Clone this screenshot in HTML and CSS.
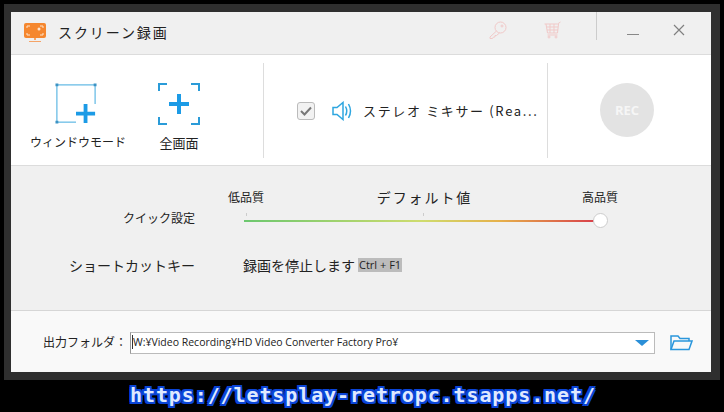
FILE: index.html
```html
<!DOCTYPE html>
<html lang="ja">
  <head>
    <meta charset="utf-8" />
    <title>スクリーン録画</title>
    <link rel="stylesheet" href="styles.css">
  </head>

  <body>
    <div class="frame">
      <div class="window">
        <div class="title-bar">
          <svg class="logo" width="22" height="20" viewBox="0 0 22 20">
            <rect x="0" y="0" width="22" height="15" rx="2" fill="#f5872f" />
            <path d="M3 5V3h3M16 3h3v2M3 10v2h3M19 10v2h-3" fill="none" stroke="#fde3cc" stroke-width="1" />
            <circle cx="15" cy="6" r="1.5" fill="#fde3cc" />
            <path d="M10 15h2v2h-2zM5 18h12v1H5z" fill="#f5a468" />
          </svg>
          <span class="title">スクリーン録画</span>
          <div class="title-actions">
            <svg class="key-icon" width="18" height="18" viewBox="0 0 18 18" fill="none" stroke="#f1c9c8" stroke-width="1">
              <circle cx="11.5" cy="6.5" r="5.5" />
              <circle cx="13" cy="5" r="1" />
              <path d="M7.5 10L1 16v1.500h2.500l1-1.500h1.500v-1.500h1.500L10.500 12" />
            </svg>
            <svg class="cart-icon" width="18" height="18" viewBox="0 0 18 18" fill="none" stroke="#f1c9c8" stroke-width="1">
              <path d="M0.500 3h13l3-2M2 3l1.500 9h10l1-9M3 6h11M3 9h11M6 3v9M10 3v9" />
              <path d="M3.500 14h10" />
              <circle cx="5" cy="16" r="1" />
              <circle cx="12" cy="16" r="1" />
            </svg>
            <div class="title-divider"></div>
            <svg class="min-icon" width="12" height="12" viewBox="0 0 12 12">
              <path d="M0 10.500h12" stroke="#888" stroke-width="1" />
            </svg>
            <svg class="close-icon" width="12" height="12" viewBox="0 0 12 12">
              <path d="M1 1l10 10M11 1L1 11" stroke="#808080" stroke-width="1.200" />
            </svg>
          </div>
        </div>

        <div class="toolbar">
          <div class="tools">
            <div class="tool tool-window">
              <svg width="42" height="42" viewBox="0 0 44 44">
                <path d="M22 41H2V2h40v20" fill="none" stroke="#35a6dc" stroke-width="1" />
                <path d="M0.500 0.500h3v3h-3zM40.500 0.500h3v3h-3zM0.500 39.500h3v3h-3z" fill="#3d93c4" />
                <path d="M30 22h4v8h8v4h-8v8h-4v-8h-8v-4h8z" fill="#1c9be6" />
              </svg>
              <span>ウィンドウモード</span>
            </div>
            <div class="tool tool-full">
              <svg width="44" height="44" viewBox="0 0 44 44">
                <path d="M2 9V2h8M34 2h8v7M2 35v7h8M34 42h8v-7" fill="none" stroke="#2a9bd8" stroke-width="2" />
                <path d="M20 12h4v8h8v4h-8v8h-4v-8h-8v-4h8z" fill="#1c9be6" />
              </svg>
              <span>全画面</span>
            </div>
          </div>
          <div class="source">
            <div class="check">
              <svg width="12" height="10" viewBox="0 0 12 10">
                <path d="M1 5l3.500 3.500L11 1.500" fill="none" stroke="#777" stroke-width="2" />
              </svg>
            </div>
            <svg class="speaker" width="22" height="20" viewBox="0 0 22 20" fill="none" stroke="#2ea6e0" stroke-width="1.500">
              <path d="M1 6.500h4L11 1.500v17L5 13.500H1z" />
              <path d="M13.500 5.500q2.500 4.500 0 9M16.500 3q4 7 0 14" />
            </svg>
            <span class="source-name">ステレオ ミキサー (Rea...</span>
          </div>
          <div class="rec-area">
            <div class="rec">REC</div>
          </div>
        </div>

        <div class="settings">
          <div class="row row-quality">
            <span class="row-label">クイック設定</span>
            <div class="slider">
              <div class="slider-labels">
                <span>低品質</span>
                <span class="default-label">デフォルト値</span>
                <span>高品質</span>
              </div>
              <div class="ticks">
                <i></i>
                <i></i>
              </div>
              <div class="track">
                <div class="thumb"></div>
              </div>
            </div>
          </div>
          <div class="row row-shortcut">
            <span class="row-label shortcut-label">ショートカットキー</span>
            <div class="shortcut">
              <span>録画を停止します</span>
              <span class="keys">Ctrl + F1</span>
            </div>
          </div>
        </div>

        <div class="footer">
          <span class="folder-label">出力フォルダ：</span>
          <div class="path-box">
            <span class="path">W:¥Video Recording¥HD Video Converter Factory Pro¥</span>
            <div class="arrow"></div>
          </div>
          <svg class="folder" width="23" height="16" viewBox="0 0 23 16" fill="none" stroke="#2a96dc" stroke-width="1.500">
            <path d="M1 14.500V1h7l2 2.500h9V6" />
            <path d="M1 14.500L4 6h18l-3 8.500z" stroke-width="1.500" />
          </svg>
        </div>
      </div>
    </div>
    <div class="caption">https://letsplay-retropc.tsapps.net/</div>
  </body>
</html>
```

FILE: styles.css
```css
html,
body {
  margin: 0;
  height: 412px;
  overflow: hidden;
  background: #000;
}

body {
  font-family: "Noto Sans CJK JP", "Noto Sans", sans-serif;
  font-size: 13px;
  color: #222;
}

.frame {
  margin: 4px 4px 0 4px;
  padding: 8px 9px 8px 7px;
  background: #2f2f2f;
}

.window {
  width: 700px;
  height: 360px;
  display: flex;
  flex-direction: column;
  background: #fff;
}

.title-bar {
  height: 42px;
  display: flex;
  align-items: center;
  padding-left: 13px;
  background: #f0f0f0;
  border-bottom: 1px solid #dcdcdc;
}

.logo {
  margin-right: 12px;
}

.title {
  font-size: 14px;
  letter-spacing: 1.9px;
  margin-bottom: 2px;
}

.title-actions {
  margin-left: auto;
  height: 100%;
  display: flex;
  align-items: center;
}

.title-actions svg {
  margin-bottom: 6px;
}

.cart-icon {
  margin-left: 37px;
}

.title-divider {
  width: 1px;
  height: 28px;
  margin: 0 30px 14px 34px;
  background: #ccc;
}

.title-actions .min-icon {
  margin-right: 34px;
}

.title-actions .close-icon {
  margin-right: 26px;
}

.toolbar {
  height: 110px;
  display: flex;
  background: #fff;
  border-bottom: 1px solid #dcdcdc;
}

.tools {
  width: 253px;
  margin: 8px 0 7px;
  padding-left: 19px;
  box-sizing: border-box;
  display: flex;
  border-right: 1px solid #ddd;
}

.tool {
  display: flex;
  flex-direction: column;
  align-items: center;
  font-size: 12px;
  color: #222;
}

.tool-window svg {
  margin: 20px 4px 8px 0;
}

.tool-window span {
  width: 96px;
  text-align: center;
}

.tool-full {
  margin-left: 33px;
  width: 40px;
}

.tool-full svg {
  margin-top: 19px;
  margin-bottom: 7px;
}

.tool-full span {
  font-size: 13px;
}

.source {
  width: 284px;
  margin: 8px 0 7px;
  padding-left: 33px;
  box-sizing: border-box;
  display: flex;
  align-items: center;
  border-right: 1px solid #ddd;
}

.check {
  width: 16px;
  height: 16px;
  display: flex;
  align-items: center;
  justify-content: center;
  background: #f2f2f2;
  border: 1px solid #bbb;
  border-radius: 3px;
}

.speaker {
  margin-left: 17px;
  margin-right: 9px;
}

.source-name {
  font-size: 13px;
  white-space: nowrap;
  letter-spacing: 1.65px;
}

.rec-area {
  flex: 1;
  display: flex;
  align-items: center;
  justify-content: center;
  padding-right: 5px;
}

.rec {
  width: 54px;
  height: 54px;
  display: flex;
  align-items: center;
  justify-content: center;
  border-radius: 50%;
  background: #e3e3e3;
  color: #f6f6f6;
  font-family: "Open Sans", sans-serif;
  font-size: 13px;
  font-weight: 700;
}

.settings {
  height: 145px;
  padding-top: 22px;
  box-sizing: border-box;
  background: #f0f0f0;
  border-bottom: 1px solid #d6d6d6;
}

.row {
  display: grid;
  grid-template-columns: 184px 1fr;
  column-gap: 33px;
}

.row-label {
  text-align: right;
  font-size: 12px;
}

.row-quality {
  align-items: end;
}

.row-quality .row-label {
  margin-bottom: -4px;
}

.slider {
  width: 390px;
}

.slider-labels {
  display: flex;
  justify-content: space-between;
  font-size: 12px;
  line-height: 18px;
}

.default-label {
  font-size: 14px;
  letter-spacing: 1.9px;
  margin-left: 3px;
}

.ticks {
  display: flex;
  justify-content: flex-start;
  gap: 176px;
  height: 4px;
  margin-top: 7px;
  padding-left: 18px;
}

.ticks i {
  width: 1px;
  height: 3px;
  background: #ccc;
}

.track {
  position: relative;
  height: 2px;
  margin: 3px 18px 0 16px;
  background: linear-gradient(90deg, #6cc76f, #cfdc6e 50%, #e6b04a 72%, #d83a4a);
}

.thumb {
  position: absolute;
  right: -8px;
  top: -7px;
  width: 13px;
  height: 13px;
  background: #fff;
  border: 1px solid #ccc;
  border-radius: 50%;
}

.row-shortcut {
  margin-top: 33px;
  align-items: center;
}

.shortcut-label {
  font-size: 14px;
}

.shortcut {
  display: flex;
  align-items: center;
  padding-left: 15px;
  font-size: 14px;
}

.keys {
  margin-left: 3px;
  padding: 0 1px;
  background: #bcbcbc;
  font-family: "Open Sans", sans-serif;
  font-size: 11px;
  line-height: 14px;
  white-space: nowrap;
}

.footer {
  flex: 1;
  display: flex;
  align-items: center;
  padding-left: 32px;
  padding-top: 2px;
  background: #f9f9f9;
}

.folder-label {
  width: 87px;
  font-size: 12px;
  white-space: nowrap;
  margin-bottom: 2px;
}

.path-box {
  width: 521px;
  height: 20px;
  display: flex;
  align-items: center;
  padding-left: 2px;
  background: #fff;
  border: 1px solid #bbb;
  border-left-color: #999;
}

.path {
  flex: 1;
  font-family: "Open Sans", sans-serif;
  font-size: 10.5px;
  color: #222;
  white-space: nowrap;
  margin-bottom: 2px;
  border-left: 1px solid #333;
  margin-left: -1px;
}

.arrow {
  width: 0;
  height: 0;
  margin-right: 5px;
  border-left: 7px solid transparent;
  border-right: 7px solid transparent;
  border-top: 6px solid #2a8fd8;
}

.folder {
  margin-left: 15px;
}

.caption {
  height: 32px;
  padding-left: 130px;
  font-family: "DejaVu Sans Mono", monospace;
  font-size: 20px;
  font-weight: 700;
  line-height: 30px;
  letter-spacing: 0.9px;
  color: #dfe9ff;
  text-shadow: 2px 0 0 #0b45d8, -2px 0 0 #0b45d8, 0 2px 0 #0b45d8, 0 -2px 0 #0b45d8, 2px 2px 0 #0b45d8, -2px -2px 0 #0b45d8, 2px -2px 0 #0b45d8, -2px 2px 0 #0b45d8;
}
```
